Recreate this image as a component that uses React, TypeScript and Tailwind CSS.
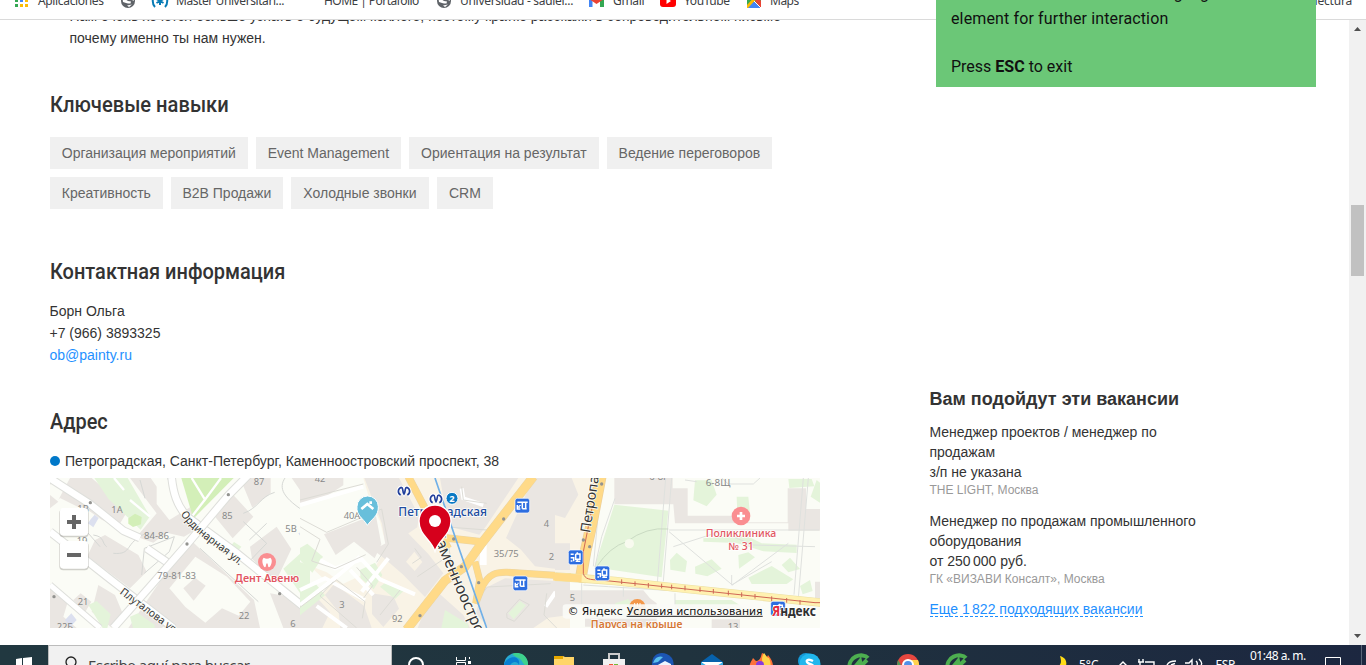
import React from "react";

const skillRows = [
  [
    ["Организация мероприятий", "w-[198px]"],
    ["Event Management", "w-[145px]"],
    ["Ориентация на результат", "w-[190px]"],
    ["Ведение переговоров", "w-[165px]"],
  ],
  [
    ["Креативность", "w-[113px]"],
    ["B2B Продажи", "w-[112px]"],
    ["Холодные звонки", "w-[138px]"],
    ["CRM", "w-[56px]"],
  ],
];

function Globe() {
  return (
    <svg className="block" width="14" height="14" viewBox="0 0 14 14">
      <circle cx="7" cy="7" r="7" fill="#5f6368" />
      <path d="M1.600 5.200 4 5l3 2 3 .5-.5 2L7 9.500 5 9 2 8ZM8 1.500l3.500 1.500L13 7l-2-1-2-2ZM6 11.500l5-1-3 2.500Z" fill="#fff" />
    </svg>
  );
}

function Bookmarks() {
  return (
    <div className="relative h-5 shrink-0 overflow-hidden border-b border-[#dadada] bg-white">
      <div className="-mt-[7px] flex h-4 items-center whitespace-nowrap font-['Noto_Sans',sans-serif] text-[12px] leading-4 text-[#3c4043]">
        <div className="flex w-[121px] items-center gap-[9px] pl-[15px]">
          <svg width="14" height="14" viewBox="0 0 14 14">
            <path d="M0 0h3v3H0zM5 0h3v3H5z" fill="#ea4335" />
            <path d="M5 5h3v3H5z" fill="#4285f4" />
            <path d="M10 5h3v3h-3zM5 10h3v3H5zM10 10h3v3h-3z" fill="#fbbc04" />
            <path d="M0 5h3v3H0zM0 10h3v3H0z" fill="#34a853" />
          </svg>
          <span className="tracking-[-0.35px]">Aplicaciones</span>
        </div>
        <div className="w-[30px]"><Globe /></div>
        <div className="flex w-[286px] items-center">
          <svg width="18" height="14" viewBox="0 0 18 14" fill="none" stroke="#087bb5" strokeWidth="2">
            <path d="M4 1C1 4 1 10 4 13M14 1c3 3 3 9 0 12M9 3v8M5.500 5l7 4M12.500 5l-7 4" />
          </svg>
          <span className="ml-[7px] w-[148px] tracking-[-0.42px]">Máster Universitari...</span>
          <span className="tracking-[-0.55px]">HOME | Portafolio</span>
        </div>
        <div className="flex w-[152px] items-center gap-[9px]"><Globe /><span className="tracking-[-0.3px]">Universidad - sadiel...</span></div>
        <div className="flex w-[71px] items-center gap-[9px]">
          <svg width="15" height="12" viewBox="0 0 15 12">
            <path d="M0 1h3.500v11H0z" fill="#4285f4" /><path d="M11 1h4v11h-4z" fill="#34a853" />
            <path d="M0 0h2l5.500 5L13 0h2v4L7.500 9 0 4Z" fill="#ea4335" />
          </svg>
          <span className="tracking-[-0.3px]">Gmail</span>
        </div>
        <div className="flex w-[87px] items-center gap-[8px]">
          <svg width="16" height="12" viewBox="0 0 16 12"><rect width="16" height="12" rx="3" fill="#f00" /><path d="m6.500 3 4.500 3-4.500 3Z" fill="#fff" /></svg>
          <span className="tracking-[-0.4px]">YouTube</span>
        </div>
        <div className="flex items-center gap-[9px]">
          <svg width="14" height="14" viewBox="0 0 14 14"><path d="M0 0h14v14H0z" fill="#34a853" /><path d="m0 14 7-7 7 7Z" fill="#4285f4" /><path d="m0 11 10-11h4L1 14H0Z" fill="#fbbc04" /><path d="m8 7 3-4 3 4v7Z" fill="#ea4335" /><path d="m7 7 7 7" stroke="#fff" /></svg>
          <span className="tracking-[-0.5px]">Maps</span>
        </div>
        <span className="ml-auto pr-[14px] tracking-[-0.2px]">lectura</span>
      </div>
    </div>
  );
}

function Street({ d, w = 20 }: { d: string; w?: number }) {
  return (
    <g fill="none" strokeLinejoin="round">
      <path d={d} stroke="#dedfdb" strokeWidth={w + 6} />
      <path d={d} stroke="#fff" strokeWidth={w} />
    </g>
  );
}

function BusStop({ x, y, variant = "bus" }: { x: number; y: number; variant?: "bus" | "tram" }) {
  return (
    <g transform={`translate(${x} ${y})`}>
      <rect x="-22" y="-22" width="44" height="44" rx="7" fill="#2d6de0" stroke="#fff" strokeWidth="2" />
      {variant === "bus"
        ? <path d="M-15-10h31M0-10V9M10-10V9M0 9h13M-15-2v12h9M-15 4h8M-7-2v3" fill="none" stroke="#fff" strokeWidth="4.500" />
        : <path d="M-15-9h9M-15 1h9v11M-15 11h5M0-10V6h13V-10H0M5-15v5M5 6v8M0 12h14" fill="none" stroke="#fff" strokeWidth="4.500" />}
    </g>
  );
}

const metroPath = "M-8-11C-19-7-20 7-10 12M-8-11C-1-10-6 1 0 9C6 1 1-10 8-11M8-11C19-7 20 7 10 12";

function CityMap() {
  return (
    <svg className="block h-[150px] w-[770px]" viewBox="30 24 2310 450" fontFamily="'Noto Sans', sans-serif">
      <rect x="30" y="24" width="2310" height="450" fill="#fbfcf6" />
      <g fill="#eae6e2">
        <path d="M55 90 90 24h65l110 95-30 50-50-20-50-35-25-5-50-25ZM30 24h15L30 45ZM30 75l25 20-25 20ZM270 24h62l18 26v52l38 48 62-38 26 62-44 26-52-12-40 30-50-18 60-70Z" />
        <path d="m165 210 30-15 100 60 25 50-50 50-128-96ZM30 350l55 40-15 50 40 34H30ZM100 390l22-20 32 25-18 30ZM175 345l50 30 25 60-35 38-60-48ZM452 210l118 112 72 68 18 84H265l102-150Z" />
        <path d="m525 140 55-65 60 65-62 65ZM600 24h92v45l-55 44ZM630 230l80-60 44 67-44 92-34-23-40-40ZM755 24h55v80ZM690 370l60 10 75 94h-95Z" />
      </g>
      <path d="m388 355 78-95 95 60 70 75-35 42-50-22-50 43-60-47Z" fill="#fbfcf6" />
      <path d="m430 355 35-32 32 24-36 45Z" fill="#eae6e2" />
      <path d="M163 24h100l67 115-28 40L205 86ZM145 405l25-12 42 40-10 41h-14ZM270 440l24-10 50 34v10h-65ZM730 296l80-72v115l-30 30ZM780 358l30-18v32l-26 28ZM570 230l12-14 22 14-10 12Z" fill="#e4f4da" />
      <path d="m265 145 20-14 20 10-2 22-24 8-14-10Z" fill="#d3efb8" />
      <path d="M424 24h157L460 146Z" fill="#d3efb8" />
      <path d="m152 148 12-14 12 10-16 28-16-12ZM775 190l17-8 17 20-16 13ZM75 450l19-20 16 20-20 22Z" fill="#dce0ef" />
      <path d="m455 24 40 65 48-65M455 140 494 90M222 24l30 36M270 90l60 50" fill="none" stroke="#fff" strokeWidth="7" />
      <path d="m305 315 8-80 90-35-15 45-75 65M735 24c-20 30-8 60 70 108M610 130c45-15 50-50 94-63M610 155l70 65-50 52M680 160l-52 50M160 195c35 5 25 25 40 35M220 250c60 5 30-30 98-60M383 24l40 110M300 30l15 55M180 230l-35-40M30 195l230 170M480 235l175 160" fill="none" stroke="#d6d8d5" strokeWidth="3" />
      <Street d="m30 25 120 77 100 80 50 22M320 235l72 49" />
      <Street d="m30 185 180 142 190 147" />
      <Street d="M395 24c5 45 15 80 45 115l150 110 280 225" />
      <Street d="M640 0 565 76 442 222 330 350 220 474" />
      <Street d="m30 345 150 129" w={15} />

      <g transform="translate(780 0)">
        <path d="M0 24h810v450H0l20-55 70-75L0 260Z" fill="#f9f3e6" />
        <path d="M70 24h120l20 70 30 60 20 80-40 65-90 42-50-34L0 276V105l70-32Z" fill="#fbfcf6" />
        <path d="M0 24h130v22L70 85 0 105ZM72 193l110-43 45-17 17 90-20 42-62-50-55 40ZM193 24h104l60 113-5 35-43 29-50 40-13-80ZM220 240l100-55 65 67 45 58-55 71-67-68-52-45ZM75 375l28-34 90 68 22 65h-94l-5-47ZM216 370l65 10 16 36-47 55-34-39ZM420 24h235l-97 145-20 25-93-25ZM700 24h110v278l-105-13-42-50-45-35ZM545 360l70-35 195 10v100l-65 8-45 31H565l-37-44ZM0 410l50-28 40 45-23 47H0ZM400 355l90 80 20 39H353Z" fill="#eae6e2" />
        <path d="m318 275 25-30 24 31-23 27Z" fill="#f9f3e6" />
        <path d="m0 355 45-16 30 37-75 60ZM0 270v-36l22-13 47 39-32 48ZM180 300l45-22 22 37-26 43-39-33ZM240 350l24-18 47 31-26 24ZM435 420l70 43v11H424ZM625 430l35-37 18 13-37 42Z" fill="#e4f4da" />
        <g fill="none" stroke="#fff" strokeWidth="12">
          <path d="m0 105 190-55M60 270l45 25 80-27 55 60 105 45M0 360l75-35 120 65M0 405l110-85 70-60M150 300l70 75M50 408l90 66M265 265l-80 100M485 55l5 30 60 20M737 410l30-44" />
          <path d="M550 205v80" strokeWidth="20" />
        </g>
        <path d="m0 145 80 42 165-70 20 105-35 55M0 170l60 38-25 65 70 23 92-42M0 90l190-48M0 412l110-82 85 65-8 50M100 335 60 378l110 96M170 292l48 55-27 37M300 360l-60 75M337 280l27-18-20-27M485 50l5 40 70 10M740 370l-8 65 38 39M540 380l22-29 190-10M325 25l120 195 15 105M352 320l75-50M690 34 560 180 430 170M620 430l38-42 30 16-45 50-22-10Z" fill="none" stroke="#dddcd6" strokeWidth="3" />
        <g fill="none" stroke="#ead4a4">
          <path d="m325 20 50 95 70 120M440 204l110 12" strokeWidth="23" />
          <path d="M700 20 545 220 495 290 435 332 320 479" strokeWidth="28" />
          <path d="m525 275 14 55-12 70 20-50c20-38 40-44 75-43l190 12" strokeWidth="21" />
        </g>
        <g fill="none" stroke="#ffda88">
          <path d="m325 20 50 95 70 120M440 204l110 12" strokeWidth="20" />
          <path d="M700 20 545 220 495 290 435 332 320 479" strokeWidth="25" />
          <path d="m525 275 14 55-12 70 20-50c20-38 40-44 75-43l190 12" strokeWidth="18" />
        </g>
        <path d="m405 24 75 220 80 230" fill="none" stroke="#70b0e8" strokeWidth="5" />
      </g>

      <g transform="translate(1545 0)">
        <path d="M0 24h125L75 310H0Z" fill="#f9f3e6" />
        <path d="M0 24h50l20 50-40 70L0 135ZM0 220h45v80H0ZM178 24h175v31h45v82h140v20h160V55h55v62h42v65h-95v-22H360l-5-57H178ZM285 385l20 15v70H90v-60H0v-49h265ZM470 448h85v26h-85ZM780 335h15v63h-15Z" fill="#eae6e2" />
        <path d="m178 104 162 18-20 200-202-30ZM420 31h50l15 43-30 35-40-18ZM545 80h35l5 52h-38ZM700 27h70l8 22-75 5ZM445 205l125-10 50 25 105 4v25l-100-5-80-25-100-4ZM345 270l20-22 31 26-5 33-45-8ZM420 290l50-22 30 28-43 23-36-8ZM550 255l30-8 20 15-48 34ZM580 323l70-35 65 40-20 14H590ZM680 285l25-22 30 34-35 10ZM180 400l40-13 25 40-65 5ZM360 390h170l40 25H360ZM735 348l30-18 8 33-30 10ZM767 80l18-50 10 8v60Z" fill="#e4f4da" />
        <path d="m350 24-25 310M332 24l-25 315M342 180h450M342 185l190 160L700 220M530 345 650 275M530 345v-30M355 230l140-45 100 40 185 5M390 30l35 5M500 24l20 18h75l20-18M760 24l-30 360M745 24l-28 350M120 290l20-90 40-115M140 24l-25 265M355 360l440 42M85 345l75 5 205 13M80 340v72l100 62M205 350v30M360 370v35" fill="none" stroke="#dfe1de" strokeWidth="3" />
        <path d="M137 20C122 100 105 190 92 242l-17 95" fill="none" stroke="#ebcf9a" strokeWidth="35" />
        <path d="M137 20C122 100 105 190 92 242l-17 95" fill="none" stroke="#ffda88" strokeWidth="31" />
        <path d="m0 320 80 5 100 8 220 24 400 41" fill="none" stroke="#ebdfa4" strokeWidth="26" />
        <path d="m0 320 80 5 100 8 220 24 400 41" fill="none" stroke="#fff1b0" strokeWidth="22" />
        <path d="m-5 320 85 5" fill="none" stroke="#ffda88" strokeWidth="23" />
        <path d="M111 115 85 245v65c5 18 18 19 50 20l145 15 500 53h20" fill="none" stroke="#cf6655" strokeWidth="3" />
        <path d="M200 328v14M240 334v14M280 339v14M320 341v14M350 344v14M390 347v14M435 352v14M475 357v14M520 362v14M560 367v14M600 372v14M650 379v14M695 384v14M735 390v14" stroke="#cf6655" strokeWidth="3" />
        <path d="M125 290q40-60 90-75 60-45 125-38" fill="none" stroke="#cadbc3" strokeWidth="3" />
        <circle cx="223" cy="221" r="14" fill="#f8faef" />
      </g>

      <g fill="#888989" fontSize="28">
        <text x="112" y="126">1B</text><text x="110" y="222">19</text>
        <text x="214" y="130">1A</text><text x="312" y="206" textLength="75" lengthAdjust="spacingAndGlyphs">84-86</text><text x="352" y="328" textLength="116" lengthAdjust="spacingAndGlyphs">79-81-83</text>
        <text x="113" y="406">21</text><text x="50" y="480">22Б</text><text x="641" y="44">87</text><text x="546" y="146">85</text><text x="736" y="187">5В</text><text x="596" y="446">22</text><text x="751" y="472">6</text>
        <text x="824" y="37">42</text><text x="911" y="146">40А</text><text x="898" y="415">3</text><text x="1056" y="455">92</text><text x="1511" y="171">4</text><text x="1361" y="260" textLength="75" lengthAdjust="spacingAndGlyphs">35/75</text><text x="1526" y="270">2</text>
        <text x="1997" y="49" textLength="74" lengthAdjust="spacingAndGlyphs">6-8Щ</text><text x="1589" y="392">5</text><text x="2063" y="481">13</text><text x="1828" y="29">6-8Г</text>
      </g>
      <g fill="#939390">
        {[[151,98],[565,74],[441,222],[719,371],[42,380],[1391,147],[1264,290],[1316,338],[1140,437],[1241,207],[1630,210],[1649,230],[1685,42]].map(([x,y]) => <circle key={`${x}-${y}`} cx={x} cy={y} r="5" />)}
      </g>
      <g fill="#353535" stroke="#fbfcf6" strokeWidth="5" paintOrder="stroke">
        <path id="ordinary" d="M422 132C459 192 513 214 602 290" fill="none" stroke="none" />
        <text fontSize="32"><textPath href="#ordinary" textLength="236" lengthAdjust="spacingAndGlyphs">Ординарная ул.</textPath></text>
        <path id="plutalova" d="m238 370 190 140" fill="none" stroke="none" />
        <text fontSize="32"><textPath href="#plutalova" textLength="208" lengthAdjust="spacingAndGlyphs">Плуталова ул.</textPath></text>
        <path id="avenue" d="M1176 190 1216 285 1335 560" fill="none" stroke="none" />
        <text fontSize="47"><textPath href="#avenue">Каменноостровский</textPath></text>
        <path id="petro" d="M1650 190 1694-90" fill="none" stroke="none" />
        <text fontSize="42"><textPath href="#petro">Петропавловская</textPath></text>
      </g>
      <g fontWeight="600" textAnchor="middle" stroke="#fff" strokeWidth="4" paintOrder="stroke">
        <g fill="#e25661" fontSize="31"><text x="681" y="337" textLength="193" lengthAdjust="spacingAndGlyphs">Дент Авеню</text><text x="2103" y="202" textLength="212" lengthAdjust="spacingAndGlyphs" fontWeight="500">Поликлиника</text><text x="2103" y="240" textLength="76" lengthAdjust="spacingAndGlyphs" fontWeight="500">№ 31</text></g>
        <text x="1208" y="138" fill="#214c9e" fontSize="37" fontWeight="500" textLength="266" lengthAdjust="spacingAndGlyphs">Петроградская</text>
        <text x="1790" y="475" fill="#d67835" fontSize="32" textLength="275" lengthAdjust="spacingAndGlyphs">Паруса на крыше</text>
      </g>
      <circle cx="681" cy="276" r="27" fill="#fa8e91" />
      <path d="M671 263q10 6 20 0c10 8 0 28-4 29-4 0-2-12-6-12s-2 12-6 12c-4-1-13-21-4-29Z" fill="#fff" />
      <circle cx="2103" cy="138" r="28" fill="#fa8e91" /><path d="M2091 138h24M2103 126v24" stroke="#fff" strokeWidth="8" />
      <path d="M982 166c-12-21-34-30-31-56a32 32 0 0 1 64 0c1 29-21 37-33 56Z" fill="#68bfdb" stroke="#fff" strokeWidth="3" />
      <path d="m964 117 18-15 18 15M992 102v-8" fill="none" stroke="#fff" strokeWidth="8" />
      {[[1092, 63], [1188, 86]].map(([x, y]) => (
        <g key={x} transform={`translate(${x} ${y})`} fill="none">
          <path d={metroPath} stroke="#fff" strokeWidth="11" />
          <path d={metroPath} stroke="#213e9a" strokeWidth="5" />
        </g>
      ))}
      <circle cx="1236" cy="85" r="18" fill="#0879c4" stroke="#fff" strokeWidth="3" /><text x="1236" y="95" textAnchor="middle" fontSize="28" fontWeight="700" fill="#fff">2</text>
      <BusStop x={1447} y={107} /><BusStop x={1441} y={340} /><BusStop x={1607} y={262} variant="tram" /><BusStop x={1687} y={310} variant="tram" /><BusStop x={2214} y={416} variant="tram" />
      <path d="M1185 244c-12-37-48-47-48-91a48 48 0 0 1 96 0c0 44-37 54-48 91Z" fill="#d6001c" stroke="#fff" strokeWidth="4" /><circle cx="1185" cy="153" r="18" fill="#fff" />
      <circle cx="1792" cy="412" r="25" fill="#f4984a" />
      <path d="M1784 399v12M1792 399v12M1800 399v12" stroke="#fff" strokeWidth="3" />
      <rect x="1568" y="403" width="604" height="43" rx="10" fill="#fbfbf7" fillOpacity=".9" />
      <g fontFamily="'DejaVu Sans', sans-serif" fontSize="32" fill="#111"><text x="1583" y="434" textLength="165" lengthAdjust="spacingAndGlyphs">© Яндекс</text><text x="1760" y="434" textLength="408" lengthAdjust="spacingAndGlyphs">Условия использования</text></g>
      <path d="M1760 439h408" stroke="#222" strokeWidth="3" />
      <text x="2196" y="437" fontSize="42" fontWeight="700" textLength="132" lengthAdjust="spacingAndGlyphs" fill="#303030" stroke="#fff" strokeWidth="5" paintOrder="stroke"><tspan fill="#e3293a">Я</tspan>ндекс</text>
      <g><rect x="58" y="117" width="88" height="85" rx="12" fill="#817d77" opacity=".35" /><rect x="58" y="216" width="88" height="85" rx="12" fill="#817d77" opacity=".35" /><rect x="60" y="114" width="84" height="83" rx="10" fill="#fff" /><rect x="60" y="213" width="84" height="83" rx="10" fill="#fff" /><path d="M81 156h42M102 135v42M81 255h42" stroke="#666" strokeWidth="12" /></g>
    </svg>
  );
}

function Vacancy() {
  return (
    <main className="w-[869.500px] shrink-0 pl-[49.500px] text-[14px] leading-[22px]">
      <div className="ml-5 -mt-[15px] h-[44px] whitespace-nowrap">
        <p>Нам очень хочется больше узнать о будущем коллеге, поэтому кратко расскажи в сопроводительном письме</p>
        <p>почему именно ты нам нужен.</p>
      </div>
      <h2 className="mt-[44px] h-6 origin-left scale-x-[.915] font-['Roboto',sans-serif] text-[22px] leading-6 font-medium">Ключевые навыки</h2>
      <div className="mt-[20px] ml-[0.500px] flex flex-col gap-2 text-[#666]">
        {skillRows.map((row, i) => <div key={i} className="flex gap-2">{row.map(([label, width]) => <span key={label} className={`${width} flex h-8 items-center justify-center whitespace-nowrap bg-[#f0f0f0] pr-[0.300px]`}>{label}</span>)}</div>)}
      </div>
      <h2 className="mt-[51px] h-6 origin-left scale-x-[.908] font-['Roboto',sans-serif] text-[22px] leading-6 font-medium">Контактная информация</h2>
      <div className="mt-[16px]"><p>Борн Ольга</p><p>+7 (966) 3893325</p><a href="mailto:ob@painty.ru" className="text-[#1e90ff]">ob@painty.ru</a></div>
      <h2 className="mt-[44px] h-6 origin-left scale-x-[.905] font-['Roboto',sans-serif] text-[22px] leading-6 font-medium">Адрес</h2>
      <div className="mt-[16px] ml-[0.500px] flex h-[28px] items-start gap-[5px] whitespace-nowrap"><i className="mt-[6px] size-[10px] rounded-full bg-[#0078c9]" /><span>Петроградская, Санкт-Петербург, Каменноостровский проспект, 38</span></div>
      <div className="ml-[0.500px]"><CityMap /></div>
    </main>
  );
}

function Suggestions() {
  return (
    <aside className="ml-[60px] w-[290px] pt-[367px] text-[14px] leading-5">
      <h3 className="h-6 whitespace-nowrap text-[18px] leading-6 font-bold">Вам подойдут эти вакансии</h3>
      <div className="mt-[11px]"><p>Менеджер проектов / менеджер по</p><p>продажам</p><p>з/п не указана</p><p className="h-[15px] pt-px text-[12px] leading-[15px] text-[#999]">THE LIGHT, Москва</p></div>
      <div className="mt-[14px]"><p>Менеджер по продажам промышленного</p><p>оборудования</p><p>от 250<span className="[word-spacing:-1.500px]"> 000</span> руб.</p><p className="h-[15px] pt-px text-[12px] leading-[15px] text-[#999]">ГК «ВИЗАВИ Консалт», Москва</p></div>
      <a href="#" className="mt-[14px] inline-block h-[17px] whitespace-nowrap border-b border-dashed border-[#1e90ff] pt-px leading-4 text-[#1e90ff]">Еще 1<span className="[word-spacing:-1.500px]"> 822</span> подходящих вакансии</a>
    </aside>
  );
}

function TaskIcon({ kind }: { kind: string }) {
  if (kind === "search") return <svg width="20" height="20"><circle cx="10" cy="12" r="7" fill="none" stroke="#fff" strokeWidth="2" /></svg>;
  if (kind === "tasks") return <svg width="20" height="20"><path d="M1.500 4v3.500h9V4M1.500 14v-4.500h9V14M14.500 4v2M14.500 12v2" fill="none" stroke="#fff" /><path d="M13 8h3v3h-3z" fill="#fff" /></svg>;
  if (kind === "edge") return <svg width="24" height="20"><circle cx="12" cy="12" r="12" fill="#28a9d2" /><path d="M8 1C18-3 25 5 24 13c-7-1-4-7-12-9Z" fill="#3ed18d" /><path d="M0 11C4 2 17 2 15 12c-2-5-9-4-10 4H1Z" fill="#087fd2" /></svg>;
  if (kind === "folder") return <svg width="22" height="20"><path d="M1 3h9l2 1h9v16H1Z" fill="#ffd568" /><path d="M1 3h9v3H1Z" fill="#e6a800" /></svg>;
  if (kind === "store") return <svg width="24" height="20"><path d="M7 6V1h10v5" fill="none" stroke="#ccc" strokeWidth="2" /><path d="M1 6h22v14H1Z" fill="#f1f1f1" /><path d="M7 11h4v5H7Z" fill="#ef5533" /><path d="M12 11h4v5h-4Z" fill="#78b936" /></svg>;
  if (kind === "bird") return <svg width="24" height="20"><path d="M1 13C0-1 13-3 20 4c4 4 3 14 0 16H3Z" fill="#1c56b4" /><path d="M5 13 14 8l6 3v9H6Z" fill="#eef6ff" /><path d="M2 10q3-8 10-6L7 9Z" fill="#5bc1ed" /></svg>;
  if (kind === "mail") return <svg width="24" height="20"><path d="m1 9 11-8 11 8v11H1Z" fill="#0762ad" /><path d="M2 9h20v9H2Z" fill="#fff" /><path d="m1 9 11 7 11-7v11H1Z" fill="#37aee9" /></svg>;
  if (kind === "firefox") return <svg width="24" height="20"><path d="M2 19c-4-7 1-11 2-14l3 3c5 0 5-6 6-8 3 1 3 3 5 4l1-2c8 9 5 17 1 18Z" fill="#ff7139" /><path d="M15 0c2 2 3 5 5 5 4 9 0 15-3 15-1-7-7-12-2-20Z" fill="#ffd449" /><circle cx="11" cy="12" r="4" fill="#873bdd" /></svg>;
  if (kind === "skype") return <svg width="24" height="20"><circle cx="8" cy="8" r="8" fill="#159bd9" /><circle cx="12" cy="11" r="10.500" fill="#21b7ed" /><path d="M15 8C8 4 7 10 12 11s4 6-3 3" fill="none" stroke="#fff" strokeWidth="2.500" /></svg>;
  if (kind === "chrome") return <svg width="24" height="20"><circle cx="12" cy="12" r="11" fill="#e7473f" /><path d="M2 7l8 13H3Q0 13 2 7Z" fill="#4a9b59" /><path d="M12 7h10q3 8-2 13H12Z" fill="#ffd24e" /><circle cx="12" cy="12" r="6" fill="#fff" /><circle cx="12" cy="12" r="4" fill="#5190e9" /></svg>;
  return <svg width="24" height="20"><path d="M3 18C-1 3 16-1 21 5M8 14 13 8l1 5 6-6" fill="none" stroke="#4daf50" strokeWidth="4" /></svg>;
}

function Taskbar() {
  return (
    <footer className="flex h-5 shrink-0 items-start overflow-hidden bg-gradient-to-r from-[#213840] via-[#20333e] to-[#1c2740] text-white">
      <div className="flex h-5 w-12 items-end justify-center"><svg width="16" height="9"><path d="m0 3 6-1v7H0ZM7 2l9-1v8H7Z" fill="#fff" /></svg></div>
      <div className="flex h-5 w-[344px] items-start border border-b-0 border-[#bcbcbc] bg-[#f1f1f1] pt-[10px] font-['Noto_Sans',sans-serif] text-[15px] leading-[19px] text-[#444]">
        <svg className="ml-[14px] shrink-0" width="16" height="16"><circle cx="8" cy="6" r="5" fill="none" stroke="#222" strokeWidth="1.300" /><path d="m4 10-3 4" stroke="#222" /></svg><span className="ml-[9px] tracking-[-0.45px]">Escribe aquí para buscar</span>
      </div>
      <div className="flex h-5 w-[576px] items-start pl-[14px] pt-[8px]">
        {["search", "tasks", "edge", "folder", "store", "bird", "mail", "firefox", "skype", "c", "chrome", "c2"].map(icon => <div key={icon} className="flex w-[49px] shrink-0 justify-start"><TaskIcon kind={icon} /></div>)}
      </div>
      <div className="ml-[88px] flex h-5 items-start pt-[10px]"><svg width="14" height="12"><path d="M4 1c7 2 8 8 4 14L0 12C5 11 6 7 4 1Z" fill="#ffdc16" /></svg></div>
      <span className="ml-[9px] pt-[12px] font-['Noto_Sans',sans-serif] text-[12px] leading-4">5°C</span>
      <svg className="ml-[19px] shrink-0" width="90" height="20"><path d="m1 21 4-4 4 4M21 14v3M25 14v3M20 17h6M22 17v3M27 17h9v3M49 20c1-2 4-4 9-4M53 20l4-1.500M67 18h4l3-3v5M78 16q2 2 1 4M81 14q4 4 2 6" fill="none" stroke="#fff" strokeWidth="1.400" /></svg>
      <span className="ml-auto mr-[15px] pt-[12px] font-['Noto_Sans',sans-serif] text-[12px] leading-4 tracking-[-0.300px]">ESP</span>
      <span className="w-[75px] pt-[3px] font-['Noto_Sans',sans-serif] text-[12px] leading-4 tracking-[-0.5px]">01:48 a. m.</span>
      <svg className="mr-1 shrink-0" width="37" height="20"><path d="M.5 20v-7.500h15V20" fill="none" stroke="#fff" /><path d="M36.500 0v20" stroke="#596578" /></svg>
    </footer>
  );
}

export default function App() {
  return (
    <div className="relative flex h-[665px] w-[1366px] flex-col overflow-hidden bg-white font-['Liberation_Sans',sans-serif] text-[#333]">
      <Bookmarks />
      <div className="flex h-[625px] shrink-0 overflow-hidden">
        <div className="flex h-full w-[1349px] overflow-hidden"><Vacancy /><Suggestions /></div>
        <div className="flex h-full w-[17px] flex-col items-center bg-[#f1f1f1] pt-[7px]">
          <svg className="shrink-0" width="7" height="4"><path d="m0 4 3.500-4L7 4Z" fill="#505050" /></svg>
          <div className="mt-[174px] h-[71px] w-[13px] shrink-0 bg-[#c1c1c1]" />
          <svg className="mt-[358px] shrink-0" width="7" height="4"><path d="M0 0h7L3.500 4Z" fill="#505050" /></svg>
        </div>
      </div>
      <Taskbar />
      <section className="absolute left-[936px] top-0 h-[87px] w-[380px] overflow-hidden bg-[#6bc777] px-[15px] font-['Roboto',sans-serif] text-[16px] leading-6 text-[#101010]">
        <p className="-mt-[18px] whitespace-nowrap tracking-[0.15px]">Use the mouse to select and highlight an</p><p className="mt-px whitespace-nowrap tracking-[0.13px]">element for further interaction</p><p className="mt-6">Press <strong>ESC</strong> to exit</p>
      </section>
    </div>
  );
}
